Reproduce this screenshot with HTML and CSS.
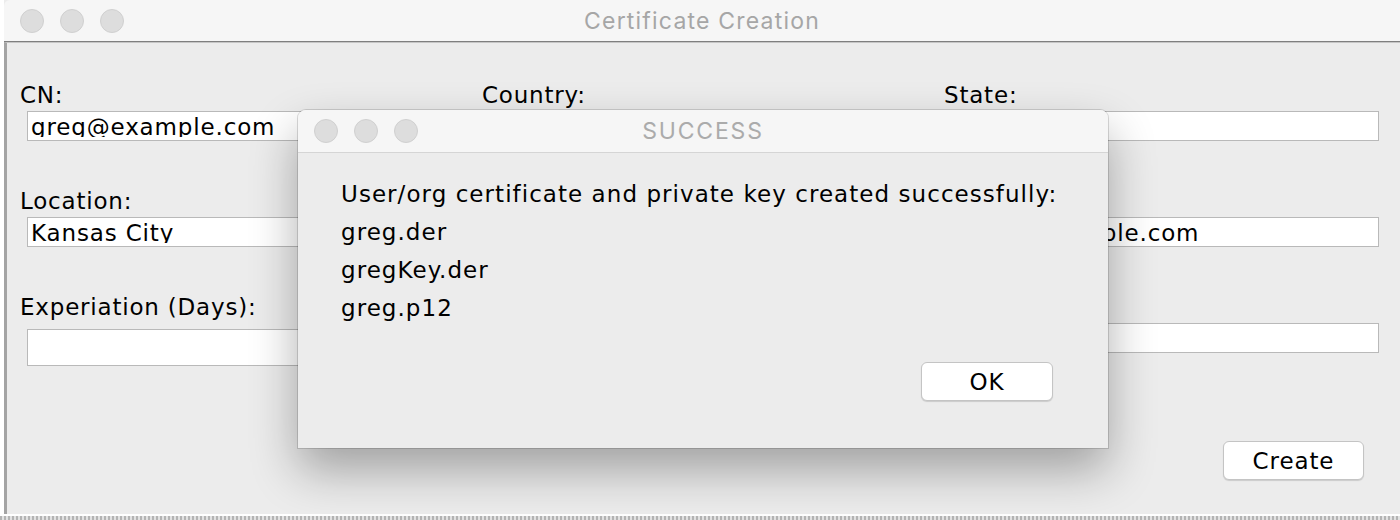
FILE: index.html
```html
<!DOCTYPE html>
<html lang="en">
<head>
<meta charset="utf-8">
<title>Certificate Creation</title>
<link rel="stylesheet" href="styles.css">
</head>
<body>
<div class="desktop">
  <div class="window">
    <div class="titlebar">
      <div class="lights"><span class="light"></span><span class="light"></span><span class="light"></span></div>
      <div class="title">Certificate Creation</div>
    </div>
    <div class="content">
      <div class="form">
        <div class="cell"><span class="label">CN:</span><div class="input"><span class="value">greg@example.com</span></div></div>
        <div class="cell"><span class="label">Country:</span><div class="input"><span class="value"></span></div></div>
        <div class="cell"><span class="label">State:</span><div class="input"><span class="value"></span></div></div>

        <div class="cell"><span class="label">Location:</span><div class="input"><span class="value">Kansas City</span></div></div>
        <div class="cell"><span class="label"></span><div class="input"><span class="value"></span></div></div>
        <div class="cell"><span class="label"></span><div class="input"><span class="value">greg@example.com</span></div></div>

        <div class="cell"><span class="label">Experiation (Days):</span><div class="input input-tall"><span class="value"></span></div></div>
        <div class="cell"><span class="label"></span><div class="input"><span class="value"></span></div></div>
        <div class="cell"><span class="label"></span><div class="input"><span class="value"></span></div></div>
      </div>
      <div class="actions">
        <button class="btn btn-create" type="button">Create</button>
      </div>
    </div>
  </div>
  <div class="dock-edge"></div>

  <div class="dialog">
    <div class="titlebar dialog-titlebar">
      <div class="lights"><span class="light"></span><span class="light"></span><span class="light"></span></div>
      <div class="title title-dialog">SUCCESS</div>
    </div>
    <div class="dialog-body">
      <p class="msg">User/org certificate and private key created successfully:</p>
      <p class="msg">greg.der</p>
      <p class="msg">gregKey.der</p>
      <p class="msg">greg.p12</p>
      <div class="dialog-actions">
        <button class="btn btn-ok" type="button">OK</button>
      </div>
    </div>
  </div>
</div>
</body>
</html>
```
FILE: styles.css
```css
* { box-sizing: border-box; margin: 0; padding: 0; }
html, body { width: 1400px; height: 520px; overflow: hidden; }
body {
  background: #ffffff;
  font-family: "DejaVu Sans", Verdana, sans-serif;
  color: #000;
}
.desktop { position: relative; width: 1400px; height: 520px; }

.window {
  margin-left: 4px;
  width: 1396px;
  height: 514px;
  display: flex;
  flex-direction: column;
  background: #ececec;
}
.titlebar {
  flex: none;
  height: 42px;
  background: #f6f6f6;
  border-top-left-radius: 6px;
  border-bottom: 1px solid #7f7f7f;
  display: grid;
  grid-template-columns: 1fr auto 1fr;
  align-items: center;
}
.lights { display: flex; gap: 16px; padding-left: 16px; }
.light {
  width: 24px; height: 24px; border-radius: 50%;
  background: #dddddd; border: 1px solid #d0d0d0;
}
.title {
  font-family: "Inter", "Liberation Sans", sans-serif;
  font-size: 23px;
  color: #a6a6a6;
  letter-spacing: 1.2px;
}
.title-dialog { letter-spacing: 1.8px; color: #ababab; }

.content {
  flex: 1;
  border-top: 1px solid #c6c6c6;
  border-left: 3px solid #a4a4a4;
  padding: 39px 0 0 13px;
  display: flex;
  flex-direction: column;
}
.form {
  display: grid;
  grid-template-columns: 462px 462px 1fr;
  row-gap: 47px;
  align-items: start;
}
.label {
  display: block;
  height: 26px;
  line-height: 26px;
  font-size: 23px;
  letter-spacing: 0.8px;
  white-space: nowrap;
}
.input {
  margin: 3px 0 0 7px;
  width: 428px;
  height: 30px;
  background: #fff;
  border: 1px solid #b9b9b9;
  padding: 2px 3px 3px 3px;
}
.input-tall { margin-top: 9px; height: 37px; }
.value {
  display: block;
  height: 100%;
  overflow: hidden;
  white-space: nowrap;
  font-size: 23px;
  line-height: 26px;
  letter-spacing: 0.85px;
}

.actions {
  display: flex;
  justify-content: flex-end;
  margin-top: 75px;
  padding-right: 36px;
}
.btn {
  height: 39px;
  background: #fff;
  border: 1px solid #c4c4c4;
  border-radius: 6px;
  box-shadow: 0 1px 1px rgba(0,0,0,0.14);
  font-family: "DejaVu Sans", Verdana, sans-serif;
  font-size: 23px;
  letter-spacing: 0.9px;
  color: #000;
}
.btn-create { width: 141px; }
.btn-ok { width: 132px; }

.dock-edge {
  margin-top: 2px;
  height: 4px;
  background: repeating-linear-gradient(90deg, #b4b4b4 0 2px, #e2e2e2 2px 4px);
}

.dialog {
  position: absolute;
  left: 298px;
  top: 110px;
  width: 810px;
  height: 338px;
  background: #ececec;
  border-radius: 8px 8px 0 0;
  box-shadow: 0 0 0 1px rgba(0,0,0,0.14), 0 22px 48px rgba(0,0,0,0.32);
  display: flex;
  flex-direction: column;
}
.dialog-titlebar {
  height: 43px;
  border-radius: 8px 8px 0 0;
  border-bottom: 1px solid #d5d5d5;
}
.dialog-body {
  padding: 22px 55px 0 43px;
}
.msg {
  font-size: 23px;
  line-height: 38px;
  letter-spacing: 1.05px;
  white-space: nowrap;
}
.dialog-actions {
  display: flex;
  justify-content: flex-end;
  margin-top: 35px;
}
```
